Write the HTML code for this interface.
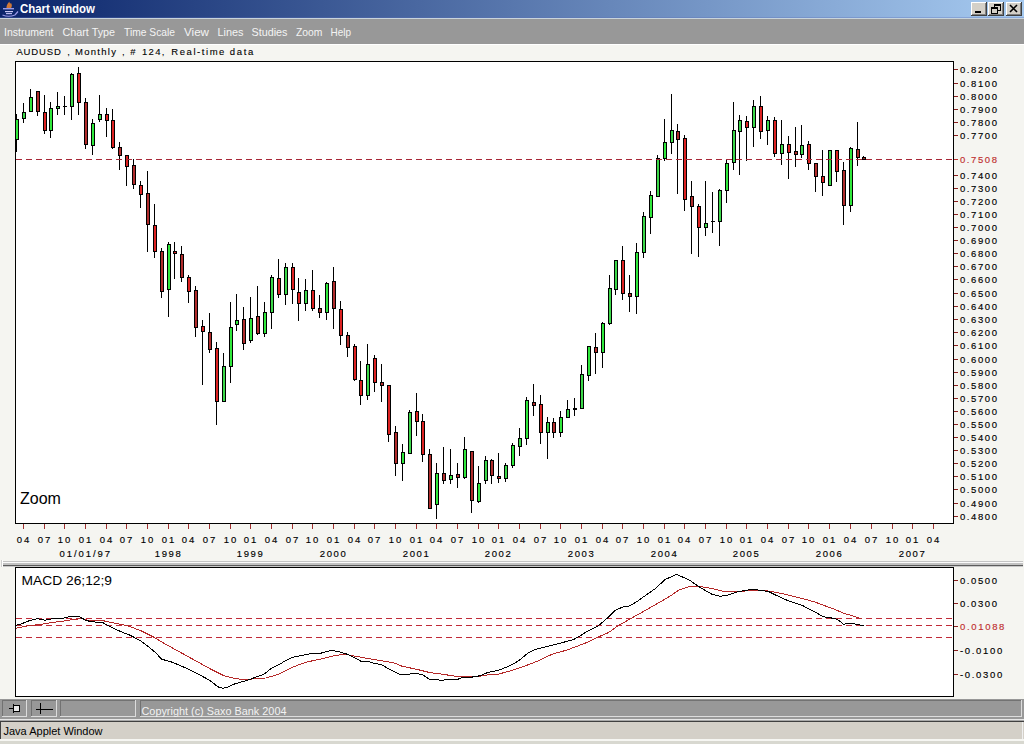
<!DOCTYPE html><html><head><meta charset="utf-8"><style>
html,body{margin:0;padding:0;width:1024px;height:744px;overflow:hidden;background:#f5f5f1}
svg{display:block}
text{font-family:"Liberation Sans", sans-serif}
</style></head><body>
<svg width="1024" height="744" viewBox="0 0 1024 744" shape-rendering="crispEdges">
<defs>
<linearGradient id="tg" x1="0" x2="1" y1="0" y2="0">
<stop offset="0" stop-color="#0a246a"/><stop offset="1" stop-color="#a6caf0"/>
</linearGradient>
</defs>
<rect x="0" y="0" width="1024" height="744" fill="#f5f5f1"/>

<rect x="0" y="0" width="1024" height="18" fill="url(#tg)"/>
<rect x="0" y="17" width="1024" height="1" fill="#5d6fb8" opacity="0.35"/><rect x="0" y="18" width="1024" height="1" fill="#c8d4dc"/>
<g shape-rendering="auto"><path d="M6.5 8.5 Q6 5 9.5 1.5 Q9 4 11.5 3.5 Q12.5 6 11 8.5 Z" fill="#d07838"/><rect x="3" y="8" width="11" height="1.4" fill="#9898e8"/><rect x="5" y="11" width="8" height="1.2" fill="#c8c8f4"/><rect x="6" y="13" width="6" height="1.2" fill="#b8b8f0"/><path d="M2.5 15 Q8.5 17.5 15 15 L18 11.5" stroke="#9a9ae8" stroke-width="1.2" fill="none"/></g>
<text x="20" y="13" font-size="12" font-weight="bold" fill="#fff" textLength="75" lengthAdjust="spacingAndGlyphs" shape-rendering="auto">Chart window</text>
<rect x="971" y="2" width="16" height="14" fill="#d4d0c8"/>
<rect x="971" y="2" width="15" height="1" fill="#fff"/><rect x="971" y="2" width="1" height="13" fill="#fff"/>
<rect x="971" y="15" width="16" height="1" fill="#404040"/><rect x="986" y="2" width="1" height="14" fill="#404040"/>
<rect x="972" y="14" width="14" height="1" fill="#808080"/><rect x="985" y="3" width="1" height="12" fill="#808080"/>
<rect x="975" y="11" width="6" height="2" fill="#000"/>
<rect x="988" y="2" width="16" height="14" fill="#d4d0c8"/>
<rect x="988" y="2" width="15" height="1" fill="#fff"/><rect x="988" y="2" width="1" height="13" fill="#fff"/>
<rect x="988" y="15" width="16" height="1" fill="#404040"/><rect x="1003" y="2" width="1" height="14" fill="#404040"/>
<rect x="989" y="14" width="14" height="1" fill="#808080"/><rect x="1002" y="3" width="1" height="12" fill="#808080"/>
<rect x="994" y="4" width="6" height="6" fill="none" stroke="#000" stroke-width="1"/><rect x="994" y="4" width="6" height="2" fill="#000"/>
<rect x="991" y="7" width="6" height="6" fill="#d4d0c8" stroke="#000" stroke-width="1"/><rect x="991" y="7" width="6" height="2" fill="#000"/>
<rect x="1006" y="2" width="16" height="14" fill="#d4d0c8"/>
<rect x="1006" y="2" width="15" height="1" fill="#fff"/><rect x="1006" y="2" width="1" height="13" fill="#fff"/>
<rect x="1006" y="15" width="16" height="1" fill="#404040"/><rect x="1021" y="2" width="1" height="14" fill="#404040"/>
<rect x="1007" y="14" width="14" height="1" fill="#808080"/><rect x="1020" y="3" width="1" height="12" fill="#808080"/>
<path d="M1010 5 L1017 12 M1017 5 L1010 12" stroke="#000" stroke-width="1.6" shape-rendering="auto"/>
<rect x="0" y="19" width="1024" height="25" fill="#989898"/>
<rect x="0" y="44" width="1024" height="1" fill="#ffffff"/>
<text x="4" y="36" font-size="11" fill="#f4f4f4" textLength="49.5" lengthAdjust="spacingAndGlyphs">Instrument</text>
<text x="62.5" y="36" font-size="11" fill="#f4f4f4" textLength="52.5" lengthAdjust="spacingAndGlyphs">Chart Type</text>
<text x="124" y="36" font-size="11" fill="#f4f4f4" textLength="51" lengthAdjust="spacingAndGlyphs">Time Scale</text>
<text x="184" y="36" font-size="11" fill="#f4f4f4" textLength="25" lengthAdjust="spacingAndGlyphs">View</text>
<text x="217.5" y="36" font-size="11" fill="#f4f4f4" textLength="26" lengthAdjust="spacingAndGlyphs">Lines</text>
<text x="251.5" y="36" font-size="11" fill="#f4f4f4" textLength="36" lengthAdjust="spacingAndGlyphs">Studies</text>
<text x="296" y="36" font-size="11" fill="#f4f4f4" textLength="26.5" lengthAdjust="spacingAndGlyphs">Zoom</text>
<text x="330.5" y="36" font-size="11" fill="#f4f4f4" textLength="20.5" lengthAdjust="spacingAndGlyphs">Help</text>
<text x="16.4" y="54.6" font-size="9.5" fill="#000" stroke="#000" stroke-width="0.1" textLength="44.5" lengthAdjust="spacing">AUDUSD</text>
<text x="67.2" y="54.6" font-size="9.5" fill="#000" stroke="#000" stroke-width="0.1" textLength="2" lengthAdjust="spacing">,</text>
<text x="75" y="54.6" font-size="9.5" fill="#000" stroke="#000" stroke-width="0.1" textLength="41" lengthAdjust="spacing">Monthly</text>
<text x="122" y="54.6" font-size="9.5" fill="#000" stroke="#000" stroke-width="0.1" textLength="2" lengthAdjust="spacing">,</text>
<text x="130.3" y="54.6" font-size="9.5" fill="#000" stroke="#000" stroke-width="0.1" textLength="6.3" lengthAdjust="spacing">#</text>
<text x="142" y="54.6" font-size="9.5" fill="#000" stroke="#000" stroke-width="0.1" textLength="22.5" lengthAdjust="spacing">124,</text>
<text x="171.3" y="54.6" font-size="9.5" fill="#000" stroke="#000" stroke-width="0.1" textLength="53.1" lengthAdjust="spacing">Real-time</text>
<text x="229.8" y="54.6" font-size="9.5" fill="#000" stroke="#000" stroke-width="0.1" textLength="23.4" lengthAdjust="spacing">data</text>
<rect x="15" y="61" width="939" height="463" fill="#fff"/>
<rect x="15" y="61" width="939" height="1" fill="#000"/><rect x="15" y="523" width="939" height="1" fill="#000"/>
<rect x="15" y="61" width="1" height="463" fill="#000"/><rect x="953" y="61" width="1" height="463" fill="#000"/>
<rect x="954" y="69" width="4" height="1" fill="#8a2020"/>
<text x="960" y="72.5" font-size="9.5" fill="#000" stroke="#000" stroke-width="0.15" textLength="37" lengthAdjust="spacing">0.8200</text>
<rect x="954" y="83" width="4" height="1" fill="#8a2020"/>
<text x="960" y="86.5" font-size="9.5" fill="#000" stroke="#000" stroke-width="0.15" textLength="37" lengthAdjust="spacing">0.8100</text>
<rect x="954" y="96" width="4" height="1" fill="#8a2020"/>
<text x="960" y="99.5" font-size="9.5" fill="#000" stroke="#000" stroke-width="0.15" textLength="37" lengthAdjust="spacing">0.8000</text>
<rect x="954" y="109" width="4" height="1" fill="#8a2020"/>
<text x="960" y="112.5" font-size="9.5" fill="#000" stroke="#000" stroke-width="0.15" textLength="37" lengthAdjust="spacing">0.7900</text>
<rect x="954" y="122" width="4" height="1" fill="#8a2020"/>
<text x="960" y="125.5" font-size="9.5" fill="#000" stroke="#000" stroke-width="0.15" textLength="37" lengthAdjust="spacing">0.7800</text>
<rect x="954" y="135" width="4" height="1" fill="#8a2020"/>
<text x="960" y="138.5" font-size="9.5" fill="#000" stroke="#000" stroke-width="0.15" textLength="37" lengthAdjust="spacing">0.7700</text>
<rect x="954" y="175" width="4" height="1" fill="#8a2020"/>
<text x="960" y="178.5" font-size="9.5" fill="#000" stroke="#000" stroke-width="0.15" textLength="37" lengthAdjust="spacing">0.7400</text>
<rect x="954" y="188" width="4" height="1" fill="#8a2020"/>
<text x="960" y="191.5" font-size="9.5" fill="#000" stroke="#000" stroke-width="0.15" textLength="37" lengthAdjust="spacing">0.7300</text>
<rect x="954" y="201" width="4" height="1" fill="#8a2020"/>
<text x="960" y="204.5" font-size="9.5" fill="#000" stroke="#000" stroke-width="0.15" textLength="37" lengthAdjust="spacing">0.7200</text>
<rect x="954" y="214" width="4" height="1" fill="#8a2020"/>
<text x="960" y="217.5" font-size="9.5" fill="#000" stroke="#000" stroke-width="0.15" textLength="37" lengthAdjust="spacing">0.7100</text>
<rect x="954" y="227" width="4" height="1" fill="#8a2020"/>
<text x="960" y="230.5" font-size="9.5" fill="#000" stroke="#000" stroke-width="0.15" textLength="37" lengthAdjust="spacing">0.7000</text>
<rect x="954" y="240" width="4" height="1" fill="#8a2020"/>
<text x="960" y="243.5" font-size="9.5" fill="#000" stroke="#000" stroke-width="0.15" textLength="37" lengthAdjust="spacing">0.6900</text>
<rect x="954" y="253" width="4" height="1" fill="#8a2020"/>
<text x="960" y="256.5" font-size="9.5" fill="#000" stroke="#000" stroke-width="0.15" textLength="37" lengthAdjust="spacing">0.6800</text>
<rect x="954" y="266" width="4" height="1" fill="#8a2020"/>
<text x="960" y="269.5" font-size="9.5" fill="#000" stroke="#000" stroke-width="0.15" textLength="37" lengthAdjust="spacing">0.6700</text>
<rect x="954" y="279" width="4" height="1" fill="#8a2020"/>
<text x="960" y="282.5" font-size="9.5" fill="#000" stroke="#000" stroke-width="0.15" textLength="37" lengthAdjust="spacing">0.6600</text>
<rect x="954" y="293" width="4" height="1" fill="#8a2020"/>
<text x="960" y="296.5" font-size="9.5" fill="#000" stroke="#000" stroke-width="0.15" textLength="37" lengthAdjust="spacing">0.6500</text>
<rect x="954" y="306" width="4" height="1" fill="#8a2020"/>
<text x="960" y="309.5" font-size="9.5" fill="#000" stroke="#000" stroke-width="0.15" textLength="37" lengthAdjust="spacing">0.6400</text>
<rect x="954" y="319" width="4" height="1" fill="#8a2020"/>
<text x="960" y="322.5" font-size="9.5" fill="#000" stroke="#000" stroke-width="0.15" textLength="37" lengthAdjust="spacing">0.6300</text>
<rect x="954" y="332" width="4" height="1" fill="#8a2020"/>
<text x="960" y="335.5" font-size="9.5" fill="#000" stroke="#000" stroke-width="0.15" textLength="37" lengthAdjust="spacing">0.6200</text>
<rect x="954" y="345" width="4" height="1" fill="#8a2020"/>
<text x="960" y="348.5" font-size="9.5" fill="#000" stroke="#000" stroke-width="0.15" textLength="37" lengthAdjust="spacing">0.6100</text>
<rect x="954" y="359" width="4" height="1" fill="#8a2020"/>
<text x="960" y="362.5" font-size="9.5" fill="#000" stroke="#000" stroke-width="0.15" textLength="37" lengthAdjust="spacing">0.6000</text>
<rect x="954" y="372" width="4" height="1" fill="#8a2020"/>
<text x="960" y="375.5" font-size="9.5" fill="#000" stroke="#000" stroke-width="0.15" textLength="37" lengthAdjust="spacing">0.5900</text>
<rect x="954" y="385" width="4" height="1" fill="#8a2020"/>
<text x="960" y="388.5" font-size="9.5" fill="#000" stroke="#000" stroke-width="0.15" textLength="37" lengthAdjust="spacing">0.5800</text>
<rect x="954" y="398" width="4" height="1" fill="#8a2020"/>
<text x="960" y="401.5" font-size="9.5" fill="#000" stroke="#000" stroke-width="0.15" textLength="37" lengthAdjust="spacing">0.5700</text>
<rect x="954" y="411" width="4" height="1" fill="#8a2020"/>
<text x="960" y="414.5" font-size="9.5" fill="#000" stroke="#000" stroke-width="0.15" textLength="37" lengthAdjust="spacing">0.5600</text>
<rect x="954" y="424" width="4" height="1" fill="#8a2020"/>
<text x="960" y="427.5" font-size="9.5" fill="#000" stroke="#000" stroke-width="0.15" textLength="37" lengthAdjust="spacing">0.5500</text>
<rect x="954" y="437" width="4" height="1" fill="#8a2020"/>
<text x="960" y="440.5" font-size="9.5" fill="#000" stroke="#000" stroke-width="0.15" textLength="37" lengthAdjust="spacing">0.5400</text>
<rect x="954" y="450" width="4" height="1" fill="#8a2020"/>
<text x="960" y="453.5" font-size="9.5" fill="#000" stroke="#000" stroke-width="0.15" textLength="37" lengthAdjust="spacing">0.5300</text>
<rect x="954" y="463" width="4" height="1" fill="#8a2020"/>
<text x="960" y="466.5" font-size="9.5" fill="#000" stroke="#000" stroke-width="0.15" textLength="37" lengthAdjust="spacing">0.5200</text>
<rect x="954" y="476" width="4" height="1" fill="#8a2020"/>
<text x="960" y="479.5" font-size="9.5" fill="#000" stroke="#000" stroke-width="0.15" textLength="37" lengthAdjust="spacing">0.5100</text>
<rect x="954" y="489" width="4" height="1" fill="#8a2020"/>
<text x="960" y="492.5" font-size="9.5" fill="#000" stroke="#000" stroke-width="0.15" textLength="37" lengthAdjust="spacing">0.5000</text>
<rect x="954" y="503" width="4" height="1" fill="#8a2020"/>
<text x="960" y="506.5" font-size="9.5" fill="#000" stroke="#000" stroke-width="0.15" textLength="37" lengthAdjust="spacing">0.4900</text>
<rect x="954" y="516" width="4" height="1" fill="#8a2020"/>
<text x="960" y="519.5" font-size="9.5" fill="#000" stroke="#000" stroke-width="0.15" textLength="37" lengthAdjust="spacing">0.4800</text>
<rect x="954" y="159" width="4" height="1" fill="#c03030"/>
<text x="960" y="162.5" font-size="9.5" fill="#c03030" stroke="#c03030" stroke-width="0.15" textLength="37" lengthAdjust="spacing">0.7508</text>
<rect x="23" y="524" width="1" height="5" fill="#a03030"/>
<text x="23" y="543" font-size="9.5" fill="#000" stroke="#000" stroke-width="0.15" text-anchor="middle" textLength="12.5" lengthAdjust="spacing">04</text>
<rect x="44" y="524" width="1" height="5" fill="#a03030"/>
<text x="44" y="543" font-size="9.5" fill="#000" stroke="#000" stroke-width="0.15" text-anchor="middle" textLength="12.5" lengthAdjust="spacing">07</text>
<rect x="64" y="524" width="1" height="5" fill="#a03030"/>
<text x="64" y="543" font-size="9.5" fill="#000" stroke="#000" stroke-width="0.15" text-anchor="middle" textLength="12.5" lengthAdjust="spacing">10</text>
<rect x="85" y="524" width="1" height="5" fill="#a03030"/>
<text x="85" y="543" font-size="9.5" fill="#000" stroke="#000" stroke-width="0.15" text-anchor="middle" textLength="12.5" lengthAdjust="spacing">01</text>
<text x="84.8" y="557" font-size="9.5" fill="#000" stroke="#000" stroke-width="0.15" text-anchor="middle" textLength="50.5" lengthAdjust="spacing">01/01/97</text>
<rect x="106" y="524" width="1" height="5" fill="#a03030"/>
<text x="106" y="543" font-size="9.5" fill="#000" stroke="#000" stroke-width="0.15" text-anchor="middle" textLength="12.5" lengthAdjust="spacing">04</text>
<rect x="126" y="524" width="1" height="5" fill="#a03030"/>
<text x="126" y="543" font-size="9.5" fill="#000" stroke="#000" stroke-width="0.15" text-anchor="middle" textLength="12.5" lengthAdjust="spacing">07</text>
<rect x="147" y="524" width="1" height="5" fill="#a03030"/>
<text x="147" y="543" font-size="9.5" fill="#000" stroke="#000" stroke-width="0.15" text-anchor="middle" textLength="12.5" lengthAdjust="spacing">10</text>
<rect x="168" y="524" width="1" height="5" fill="#a03030"/>
<text x="168" y="543" font-size="9.5" fill="#000" stroke="#000" stroke-width="0.15" text-anchor="middle" textLength="12.5" lengthAdjust="spacing">01</text>
<text x="167.8" y="557" font-size="9.5" fill="#000" stroke="#000" stroke-width="0.15" text-anchor="middle" textLength="26" lengthAdjust="spacing">1998</text>
<rect x="188" y="524" width="1" height="5" fill="#a03030"/>
<text x="188" y="543" font-size="9.5" fill="#000" stroke="#000" stroke-width="0.15" text-anchor="middle" textLength="12.5" lengthAdjust="spacing">04</text>
<rect x="209" y="524" width="1" height="5" fill="#a03030"/>
<text x="209" y="543" font-size="9.5" fill="#000" stroke="#000" stroke-width="0.15" text-anchor="middle" textLength="12.5" lengthAdjust="spacing">07</text>
<rect x="230" y="524" width="1" height="5" fill="#a03030"/>
<text x="230" y="543" font-size="9.5" fill="#000" stroke="#000" stroke-width="0.15" text-anchor="middle" textLength="12.5" lengthAdjust="spacing">10</text>
<rect x="250" y="524" width="1" height="5" fill="#a03030"/>
<text x="250" y="543" font-size="9.5" fill="#000" stroke="#000" stroke-width="0.15" text-anchor="middle" textLength="12.5" lengthAdjust="spacing">01</text>
<text x="249.8" y="557" font-size="9.5" fill="#000" stroke="#000" stroke-width="0.15" text-anchor="middle" textLength="26" lengthAdjust="spacing">1999</text>
<rect x="271" y="524" width="1" height="5" fill="#a03030"/>
<text x="271" y="543" font-size="9.5" fill="#000" stroke="#000" stroke-width="0.15" text-anchor="middle" textLength="12.5" lengthAdjust="spacing">04</text>
<rect x="292" y="524" width="1" height="5" fill="#a03030"/>
<text x="292" y="543" font-size="9.5" fill="#000" stroke="#000" stroke-width="0.15" text-anchor="middle" textLength="12.5" lengthAdjust="spacing">07</text>
<rect x="312" y="524" width="1" height="5" fill="#a03030"/>
<text x="312" y="543" font-size="9.5" fill="#000" stroke="#000" stroke-width="0.15" text-anchor="middle" textLength="12.5" lengthAdjust="spacing">10</text>
<rect x="333" y="524" width="1" height="5" fill="#a03030"/>
<text x="333" y="543" font-size="9.5" fill="#000" stroke="#000" stroke-width="0.15" text-anchor="middle" textLength="12.5" lengthAdjust="spacing">01</text>
<text x="332.8" y="557" font-size="9.5" fill="#000" stroke="#000" stroke-width="0.15" text-anchor="middle" textLength="26" lengthAdjust="spacing">2000</text>
<rect x="354" y="524" width="1" height="5" fill="#a03030"/>
<text x="354" y="543" font-size="9.5" fill="#000" stroke="#000" stroke-width="0.15" text-anchor="middle" textLength="12.5" lengthAdjust="spacing">04</text>
<rect x="374" y="524" width="1" height="5" fill="#a03030"/>
<text x="374" y="543" font-size="9.5" fill="#000" stroke="#000" stroke-width="0.15" text-anchor="middle" textLength="12.5" lengthAdjust="spacing">07</text>
<rect x="395" y="524" width="1" height="5" fill="#a03030"/>
<text x="395" y="543" font-size="9.5" fill="#000" stroke="#000" stroke-width="0.15" text-anchor="middle" textLength="12.5" lengthAdjust="spacing">10</text>
<rect x="416" y="524" width="1" height="5" fill="#a03030"/>
<text x="416" y="543" font-size="9.5" fill="#000" stroke="#000" stroke-width="0.15" text-anchor="middle" textLength="12.5" lengthAdjust="spacing">01</text>
<text x="415.8" y="557" font-size="9.5" fill="#000" stroke="#000" stroke-width="0.15" text-anchor="middle" textLength="26" lengthAdjust="spacing">2001</text>
<rect x="436" y="524" width="1" height="5" fill="#a03030"/>
<text x="436" y="543" font-size="9.5" fill="#000" stroke="#000" stroke-width="0.15" text-anchor="middle" textLength="12.5" lengthAdjust="spacing">04</text>
<rect x="457" y="524" width="1" height="5" fill="#a03030"/>
<text x="457" y="543" font-size="9.5" fill="#000" stroke="#000" stroke-width="0.15" text-anchor="middle" textLength="12.5" lengthAdjust="spacing">07</text>
<rect x="478" y="524" width="1" height="5" fill="#a03030"/>
<text x="478" y="543" font-size="9.5" fill="#000" stroke="#000" stroke-width="0.15" text-anchor="middle" textLength="12.5" lengthAdjust="spacing">10</text>
<rect x="498" y="524" width="1" height="5" fill="#a03030"/>
<text x="498" y="543" font-size="9.5" fill="#000" stroke="#000" stroke-width="0.15" text-anchor="middle" textLength="12.5" lengthAdjust="spacing">01</text>
<text x="497.8" y="557" font-size="9.5" fill="#000" stroke="#000" stroke-width="0.15" text-anchor="middle" textLength="26" lengthAdjust="spacing">2002</text>
<rect x="519" y="524" width="1" height="5" fill="#a03030"/>
<text x="519" y="543" font-size="9.5" fill="#000" stroke="#000" stroke-width="0.15" text-anchor="middle" textLength="12.5" lengthAdjust="spacing">04</text>
<rect x="540" y="524" width="1" height="5" fill="#a03030"/>
<text x="540" y="543" font-size="9.5" fill="#000" stroke="#000" stroke-width="0.15" text-anchor="middle" textLength="12.5" lengthAdjust="spacing">07</text>
<rect x="560" y="524" width="1" height="5" fill="#a03030"/>
<text x="560" y="543" font-size="9.5" fill="#000" stroke="#000" stroke-width="0.15" text-anchor="middle" textLength="12.5" lengthAdjust="spacing">10</text>
<rect x="581" y="524" width="1" height="5" fill="#a03030"/>
<text x="581" y="543" font-size="9.5" fill="#000" stroke="#000" stroke-width="0.15" text-anchor="middle" textLength="12.5" lengthAdjust="spacing">01</text>
<text x="580.8" y="557" font-size="9.5" fill="#000" stroke="#000" stroke-width="0.15" text-anchor="middle" textLength="26" lengthAdjust="spacing">2003</text>
<rect x="602" y="524" width="1" height="5" fill="#a03030"/>
<text x="602" y="543" font-size="9.5" fill="#000" stroke="#000" stroke-width="0.15" text-anchor="middle" textLength="12.5" lengthAdjust="spacing">04</text>
<rect x="622" y="524" width="1" height="5" fill="#a03030"/>
<text x="622" y="543" font-size="9.5" fill="#000" stroke="#000" stroke-width="0.15" text-anchor="middle" textLength="12.5" lengthAdjust="spacing">07</text>
<rect x="643" y="524" width="1" height="5" fill="#a03030"/>
<text x="643" y="543" font-size="9.5" fill="#000" stroke="#000" stroke-width="0.15" text-anchor="middle" textLength="12.5" lengthAdjust="spacing">10</text>
<rect x="664" y="524" width="1" height="5" fill="#a03030"/>
<text x="664" y="543" font-size="9.5" fill="#000" stroke="#000" stroke-width="0.15" text-anchor="middle" textLength="12.5" lengthAdjust="spacing">01</text>
<text x="663.8" y="557" font-size="9.5" fill="#000" stroke="#000" stroke-width="0.15" text-anchor="middle" textLength="26" lengthAdjust="spacing">2004</text>
<rect x="684" y="524" width="1" height="5" fill="#a03030"/>
<text x="684" y="543" font-size="9.5" fill="#000" stroke="#000" stroke-width="0.15" text-anchor="middle" textLength="12.5" lengthAdjust="spacing">04</text>
<rect x="705" y="524" width="1" height="5" fill="#a03030"/>
<text x="705" y="543" font-size="9.5" fill="#000" stroke="#000" stroke-width="0.15" text-anchor="middle" textLength="12.5" lengthAdjust="spacing">07</text>
<rect x="726" y="524" width="1" height="5" fill="#a03030"/>
<text x="726" y="543" font-size="9.5" fill="#000" stroke="#000" stroke-width="0.15" text-anchor="middle" textLength="12.5" lengthAdjust="spacing">10</text>
<rect x="746" y="524" width="1" height="5" fill="#a03030"/>
<text x="746" y="543" font-size="9.5" fill="#000" stroke="#000" stroke-width="0.15" text-anchor="middle" textLength="12.5" lengthAdjust="spacing">01</text>
<text x="745.8" y="557" font-size="9.5" fill="#000" stroke="#000" stroke-width="0.15" text-anchor="middle" textLength="26" lengthAdjust="spacing">2005</text>
<rect x="767" y="524" width="1" height="5" fill="#a03030"/>
<text x="767" y="543" font-size="9.5" fill="#000" stroke="#000" stroke-width="0.15" text-anchor="middle" textLength="12.5" lengthAdjust="spacing">04</text>
<rect x="788" y="524" width="1" height="5" fill="#a03030"/>
<text x="788" y="543" font-size="9.5" fill="#000" stroke="#000" stroke-width="0.15" text-anchor="middle" textLength="12.5" lengthAdjust="spacing">07</text>
<rect x="808" y="524" width="1" height="5" fill="#a03030"/>
<text x="808" y="543" font-size="9.5" fill="#000" stroke="#000" stroke-width="0.15" text-anchor="middle" textLength="12.5" lengthAdjust="spacing">10</text>
<rect x="829" y="524" width="1" height="5" fill="#a03030"/>
<text x="829" y="543" font-size="9.5" fill="#000" stroke="#000" stroke-width="0.15" text-anchor="middle" textLength="12.5" lengthAdjust="spacing">01</text>
<text x="828.8" y="557" font-size="9.5" fill="#000" stroke="#000" stroke-width="0.15" text-anchor="middle" textLength="26" lengthAdjust="spacing">2006</text>
<rect x="850" y="524" width="1" height="5" fill="#a03030"/>
<text x="850" y="543" font-size="9.5" fill="#000" stroke="#000" stroke-width="0.15" text-anchor="middle" textLength="12.5" lengthAdjust="spacing">04</text>
<rect x="871" y="524" width="1" height="5" fill="#a03030"/>
<text x="871" y="543" font-size="9.5" fill="#000" stroke="#000" stroke-width="0.15" text-anchor="middle" textLength="12.5" lengthAdjust="spacing">07</text>
<rect x="892" y="524" width="1" height="5" fill="#a03030"/>
<text x="892" y="543" font-size="9.5" fill="#000" stroke="#000" stroke-width="0.15" text-anchor="middle" textLength="12.5" lengthAdjust="spacing">10</text>
<rect x="912" y="524" width="1" height="5" fill="#a03030"/>
<text x="912" y="543" font-size="9.5" fill="#000" stroke="#000" stroke-width="0.15" text-anchor="middle" textLength="12.5" lengthAdjust="spacing">01</text>
<text x="911.8" y="557" font-size="9.5" fill="#000" stroke="#000" stroke-width="0.15" text-anchor="middle" textLength="26" lengthAdjust="spacing">2007</text>
<rect x="933" y="524" width="1" height="5" fill="#a03030"/>
<text x="933" y="543" font-size="9.5" fill="#000" stroke="#000" stroke-width="0.15" text-anchor="middle" textLength="12.5" lengthAdjust="spacing">04</text>
<text x="20" y="504" font-size="16" fill="#000">Zoom</text>
<rect x="16" y="114" width="1" height="38" fill="#000"/>
<rect x="15" y="119" width="4" height="21" fill="#000"/>
<rect x="16" y="120" width="2" height="19" fill="#30e83c"/>
<rect x="23" y="103" width="1" height="20" fill="#000"/>
<rect x="22" y="112" width="4" height="7" fill="#000"/>
<rect x="23" y="113" width="2" height="5" fill="#3cd84a"/>
<rect x="30" y="89" width="1" height="23" fill="#000"/>
<rect x="29" y="97" width="4" height="15" fill="#000"/>
<rect x="30" y="98" width="2" height="13" fill="#30e83c"/>
<rect x="37" y="91" width="1" height="25" fill="#000"/>
<rect x="36" y="91" width="4" height="21" fill="#000"/>
<rect x="37" y="92" width="2" height="19" fill="#b02c2c"/>
<rect x="44" y="95" width="1" height="39" fill="#000"/>
<rect x="43" y="112" width="4" height="19" fill="#000"/>
<rect x="44" y="113" width="2" height="17" fill="#dc2222"/>
<rect x="50" y="102" width="1" height="36" fill="#000"/>
<rect x="49" y="108" width="4" height="23" fill="#000"/>
<rect x="50" y="109" width="2" height="21" fill="#30e83c"/>
<rect x="57" y="92" width="1" height="23" fill="#000"/>
<rect x="56" y="106" width="4" height="3" fill="#000"/>
<rect x="57" y="107" width="2" height="1" fill="#3cd84a"/>
<rect x="64" y="96" width="1" height="19" fill="#000"/>
<rect x="63" y="106" width="4" height="1" fill="#000"/>
<rect x="71" y="73" width="1" height="47" fill="#000"/>
<rect x="70" y="74" width="4" height="33" fill="#000"/>
<rect x="71" y="75" width="2" height="31" fill="#3cd84a"/>
<rect x="78" y="67" width="1" height="48" fill="#000"/>
<rect x="77" y="73" width="4" height="30" fill="#000"/>
<rect x="78" y="74" width="2" height="28" fill="#dc2222"/>
<rect x="85" y="98" width="1" height="51" fill="#000"/>
<rect x="84" y="102" width="4" height="43" fill="#000"/>
<rect x="85" y="103" width="2" height="41" fill="#b02c2c"/>
<rect x="92" y="119" width="1" height="36" fill="#000"/>
<rect x="91" y="123" width="4" height="23" fill="#000"/>
<rect x="92" y="124" width="2" height="21" fill="#30e83c"/>
<rect x="99" y="95" width="1" height="27" fill="#000"/>
<rect x="98" y="114" width="4" height="6" fill="#000"/>
<rect x="99" y="115" width="2" height="4" fill="#3cd84a"/>
<rect x="106" y="108" width="1" height="29" fill="#000"/>
<rect x="105" y="114" width="4" height="7" fill="#000"/>
<rect x="106" y="115" width="2" height="5" fill="#dc2222"/>
<rect x="112" y="109" width="1" height="40" fill="#000"/>
<rect x="111" y="120" width="4" height="28" fill="#000"/>
<rect x="112" y="121" width="2" height="26" fill="#dc2222"/>
<rect x="119" y="142" width="1" height="28" fill="#000"/>
<rect x="118" y="147" width="4" height="9" fill="#000"/>
<rect x="119" y="148" width="2" height="7" fill="#b02c2c"/>
<rect x="126" y="155" width="1" height="31" fill="#000"/>
<rect x="125" y="155" width="4" height="12" fill="#000"/>
<rect x="126" y="156" width="2" height="10" fill="#dc2222"/>
<rect x="133" y="159" width="1" height="30" fill="#000"/>
<rect x="132" y="165" width="4" height="20" fill="#000"/>
<rect x="133" y="166" width="2" height="18" fill="#b02c2c"/>
<rect x="140" y="181" width="1" height="27" fill="#000"/>
<rect x="139" y="185" width="4" height="10" fill="#000"/>
<rect x="140" y="186" width="2" height="8" fill="#dc2222"/>
<rect x="147" y="171" width="1" height="81" fill="#000"/>
<rect x="146" y="193" width="4" height="32" fill="#000"/>
<rect x="147" y="194" width="2" height="30" fill="#b02c2c"/>
<rect x="154" y="204" width="1" height="54" fill="#000"/>
<rect x="153" y="225" width="4" height="27" fill="#000"/>
<rect x="154" y="226" width="2" height="25" fill="#dc2222"/>
<rect x="161" y="248" width="1" height="50" fill="#000"/>
<rect x="160" y="251" width="4" height="41" fill="#000"/>
<rect x="161" y="252" width="2" height="39" fill="#b02c2c"/>
<rect x="168" y="242" width="1" height="75" fill="#000"/>
<rect x="167" y="244" width="4" height="46" fill="#000"/>
<rect x="168" y="245" width="2" height="44" fill="#30e83c"/>
<rect x="174" y="242" width="1" height="37" fill="#000"/>
<rect x="173" y="251" width="4" height="3" fill="#000"/>
<rect x="174" y="252" width="2" height="1" fill="#dc2222"/>
<rect x="181" y="246" width="1" height="36" fill="#000"/>
<rect x="180" y="254" width="4" height="24" fill="#000"/>
<rect x="181" y="255" width="2" height="22" fill="#b02c2c"/>
<rect x="188" y="275" width="1" height="28" fill="#000"/>
<rect x="187" y="277" width="4" height="15" fill="#000"/>
<rect x="188" y="278" width="2" height="13" fill="#dc2222"/>
<rect x="195" y="286" width="1" height="51" fill="#000"/>
<rect x="194" y="290" width="4" height="38" fill="#000"/>
<rect x="195" y="291" width="2" height="36" fill="#b02c2c"/>
<rect x="202" y="320" width="1" height="65" fill="#000"/>
<rect x="201" y="326" width="4" height="6" fill="#000"/>
<rect x="202" y="327" width="2" height="4" fill="#dc2222"/>
<rect x="209" y="313" width="1" height="40" fill="#000"/>
<rect x="208" y="332" width="4" height="18" fill="#000"/>
<rect x="209" y="333" width="2" height="16" fill="#b02c2c"/>
<rect x="216" y="342" width="1" height="83" fill="#000"/>
<rect x="215" y="348" width="4" height="54" fill="#000"/>
<rect x="216" y="349" width="2" height="52" fill="#dc2222"/>
<rect x="223" y="353" width="1" height="49" fill="#000"/>
<rect x="222" y="366" width="4" height="36" fill="#000"/>
<rect x="223" y="367" width="2" height="34" fill="#3cd84a"/>
<rect x="230" y="302" width="1" height="81" fill="#000"/>
<rect x="229" y="327" width="4" height="40" fill="#000"/>
<rect x="230" y="328" width="2" height="38" fill="#30e83c"/>
<rect x="236" y="294" width="1" height="37" fill="#000"/>
<rect x="235" y="320" width="4" height="5" fill="#000"/>
<rect x="236" y="321" width="2" height="3" fill="#30e83c"/>
<rect x="243" y="307" width="1" height="43" fill="#000"/>
<rect x="242" y="319" width="4" height="25" fill="#000"/>
<rect x="243" y="320" width="2" height="23" fill="#b02c2c"/>
<rect x="250" y="297" width="1" height="46" fill="#000"/>
<rect x="249" y="318" width="4" height="23" fill="#000"/>
<rect x="250" y="319" width="2" height="21" fill="#30e83c"/>
<rect x="257" y="286" width="1" height="49" fill="#000"/>
<rect x="256" y="316" width="4" height="18" fill="#000"/>
<rect x="257" y="317" width="2" height="16" fill="#b02c2c"/>
<rect x="264" y="302" width="1" height="35" fill="#000"/>
<rect x="263" y="312" width="4" height="22" fill="#000"/>
<rect x="264" y="313" width="2" height="20" fill="#30e83c"/>
<rect x="271" y="275" width="1" height="54" fill="#000"/>
<rect x="270" y="277" width="4" height="36" fill="#000"/>
<rect x="271" y="278" width="2" height="34" fill="#3cd84a"/>
<rect x="278" y="259" width="1" height="39" fill="#000"/>
<rect x="277" y="278" width="4" height="17" fill="#000"/>
<rect x="278" y="279" width="2" height="15" fill="#dc2222"/>
<rect x="285" y="263" width="1" height="42" fill="#000"/>
<rect x="284" y="267" width="4" height="28" fill="#000"/>
<rect x="285" y="268" width="2" height="26" fill="#3cd84a"/>
<rect x="292" y="263" width="1" height="41" fill="#000"/>
<rect x="291" y="267" width="4" height="23" fill="#000"/>
<rect x="292" y="268" width="2" height="21" fill="#dc2222"/>
<rect x="298" y="278" width="1" height="43" fill="#000"/>
<rect x="297" y="292" width="4" height="12" fill="#000"/>
<rect x="298" y="293" width="2" height="10" fill="#dc2222"/>
<rect x="305" y="279" width="1" height="32" fill="#000"/>
<rect x="304" y="290" width="4" height="14" fill="#000"/>
<rect x="305" y="291" width="2" height="12" fill="#3cd84a"/>
<rect x="312" y="270" width="1" height="41" fill="#000"/>
<rect x="311" y="290" width="4" height="19" fill="#000"/>
<rect x="312" y="291" width="2" height="17" fill="#dc2222"/>
<rect x="319" y="295" width="1" height="23" fill="#000"/>
<rect x="318" y="308" width="4" height="5" fill="#000"/>
<rect x="319" y="309" width="2" height="3" fill="#b02c2c"/>
<rect x="326" y="282" width="1" height="38" fill="#000"/>
<rect x="325" y="283" width="4" height="30" fill="#000"/>
<rect x="326" y="284" width="2" height="28" fill="#30e83c"/>
<rect x="333" y="267" width="1" height="62" fill="#000"/>
<rect x="332" y="281" width="4" height="28" fill="#000"/>
<rect x="333" y="282" width="2" height="26" fill="#b02c2c"/>
<rect x="340" y="301" width="1" height="44" fill="#000"/>
<rect x="339" y="309" width="4" height="27" fill="#000"/>
<rect x="340" y="310" width="2" height="25" fill="#dc2222"/>
<rect x="347" y="332" width="1" height="25" fill="#000"/>
<rect x="346" y="335" width="4" height="13" fill="#000"/>
<rect x="347" y="336" width="2" height="11" fill="#b02c2c"/>
<rect x="354" y="344" width="1" height="37" fill="#000"/>
<rect x="353" y="346" width="4" height="34" fill="#000"/>
<rect x="354" y="347" width="2" height="32" fill="#dc2222"/>
<rect x="360" y="361" width="1" height="44" fill="#000"/>
<rect x="359" y="380" width="4" height="16" fill="#000"/>
<rect x="360" y="381" width="2" height="14" fill="#dc2222"/>
<rect x="367" y="344" width="1" height="56" fill="#000"/>
<rect x="366" y="364" width="4" height="32" fill="#000"/>
<rect x="367" y="365" width="2" height="30" fill="#3cd84a"/>
<rect x="374" y="355" width="1" height="37" fill="#000"/>
<rect x="373" y="358" width="4" height="25" fill="#000"/>
<rect x="374" y="359" width="2" height="23" fill="#dc2222"/>
<rect x="381" y="364" width="1" height="38" fill="#000"/>
<rect x="380" y="382" width="4" height="4" fill="#000"/>
<rect x="381" y="383" width="2" height="2" fill="#b02c2c"/>
<rect x="388" y="385" width="1" height="57" fill="#000"/>
<rect x="387" y="385" width="4" height="50" fill="#000"/>
<rect x="388" y="386" width="2" height="48" fill="#dc2222"/>
<rect x="395" y="426" width="1" height="50" fill="#000"/>
<rect x="394" y="432" width="4" height="32" fill="#000"/>
<rect x="395" y="433" width="2" height="30" fill="#b02c2c"/>
<rect x="402" y="444" width="1" height="37" fill="#000"/>
<rect x="401" y="452" width="4" height="12" fill="#000"/>
<rect x="402" y="453" width="2" height="10" fill="#30e83c"/>
<rect x="409" y="410" width="1" height="44" fill="#000"/>
<rect x="408" y="412" width="4" height="42" fill="#000"/>
<rect x="409" y="413" width="2" height="40" fill="#3cd84a"/>
<rect x="416" y="393" width="1" height="43" fill="#000"/>
<rect x="415" y="411" width="4" height="11" fill="#000"/>
<rect x="416" y="412" width="2" height="9" fill="#dc2222"/>
<rect x="422" y="414" width="1" height="48" fill="#000"/>
<rect x="421" y="421" width="4" height="34" fill="#000"/>
<rect x="422" y="422" width="2" height="32" fill="#dc2222"/>
<rect x="429" y="449" width="1" height="60" fill="#000"/>
<rect x="428" y="454" width="4" height="55" fill="#000"/>
<rect x="429" y="455" width="2" height="53" fill="#b02c2c"/>
<rect x="436" y="463" width="1" height="56" fill="#000"/>
<rect x="435" y="473" width="4" height="32" fill="#000"/>
<rect x="436" y="474" width="2" height="30" fill="#30e83c"/>
<rect x="443" y="447" width="1" height="37" fill="#000"/>
<rect x="442" y="473" width="4" height="8" fill="#000"/>
<rect x="443" y="474" width="2" height="6" fill="#b02c2c"/>
<rect x="450" y="449" width="1" height="35" fill="#000"/>
<rect x="449" y="475" width="4" height="5" fill="#000"/>
<rect x="450" y="476" width="2" height="3" fill="#30e83c"/>
<rect x="457" y="463" width="1" height="25" fill="#000"/>
<rect x="456" y="474" width="4" height="4" fill="#000"/>
<rect x="457" y="475" width="2" height="2" fill="#b02c2c"/>
<rect x="464" y="437" width="1" height="42" fill="#000"/>
<rect x="463" y="449" width="4" height="29" fill="#000"/>
<rect x="464" y="450" width="2" height="27" fill="#30e83c"/>
<rect x="471" y="451" width="1" height="62" fill="#000"/>
<rect x="470" y="451" width="4" height="50" fill="#000"/>
<rect x="471" y="452" width="2" height="48" fill="#b02c2c"/>
<rect x="478" y="466" width="1" height="37" fill="#000"/>
<rect x="477" y="483" width="4" height="19" fill="#000"/>
<rect x="478" y="484" width="2" height="17" fill="#30e83c"/>
<rect x="485" y="456" width="1" height="28" fill="#000"/>
<rect x="484" y="460" width="4" height="21" fill="#000"/>
<rect x="485" y="461" width="2" height="19" fill="#3cd84a"/>
<rect x="491" y="459" width="1" height="25" fill="#000"/>
<rect x="490" y="460" width="4" height="16" fill="#000"/>
<rect x="491" y="461" width="2" height="14" fill="#b02c2c"/>
<rect x="498" y="453" width="1" height="30" fill="#000"/>
<rect x="497" y="476" width="4" height="3" fill="#000"/>
<rect x="498" y="477" width="2" height="1" fill="#dc2222"/>
<rect x="505" y="463" width="1" height="19" fill="#000"/>
<rect x="504" y="465" width="4" height="14" fill="#000"/>
<rect x="505" y="466" width="2" height="12" fill="#3cd84a"/>
<rect x="512" y="443" width="1" height="25" fill="#000"/>
<rect x="511" y="445" width="4" height="21" fill="#000"/>
<rect x="512" y="446" width="2" height="19" fill="#30e83c"/>
<rect x="519" y="428" width="1" height="28" fill="#000"/>
<rect x="518" y="438" width="4" height="9" fill="#000"/>
<rect x="519" y="439" width="2" height="7" fill="#3cd84a"/>
<rect x="526" y="397" width="1" height="48" fill="#000"/>
<rect x="525" y="400" width="4" height="39" fill="#000"/>
<rect x="526" y="401" width="2" height="37" fill="#30e83c"/>
<rect x="533" y="384" width="1" height="32" fill="#000"/>
<rect x="532" y="402" width="4" height="4" fill="#000"/>
<rect x="533" y="403" width="2" height="2" fill="#b02c2c"/>
<rect x="540" y="395" width="1" height="49" fill="#000"/>
<rect x="539" y="404" width="4" height="29" fill="#000"/>
<rect x="540" y="405" width="2" height="27" fill="#dc2222"/>
<rect x="547" y="417" width="1" height="42" fill="#000"/>
<rect x="546" y="422" width="4" height="11" fill="#000"/>
<rect x="547" y="423" width="2" height="9" fill="#3cd84a"/>
<rect x="553" y="418" width="1" height="20" fill="#000"/>
<rect x="552" y="422" width="4" height="11" fill="#000"/>
<rect x="553" y="423" width="2" height="9" fill="#b02c2c"/>
<rect x="560" y="411" width="1" height="26" fill="#000"/>
<rect x="559" y="417" width="4" height="16" fill="#000"/>
<rect x="560" y="418" width="2" height="14" fill="#30e83c"/>
<rect x="567" y="400" width="1" height="18" fill="#000"/>
<rect x="566" y="409" width="4" height="9" fill="#000"/>
<rect x="567" y="410" width="2" height="7" fill="#3cd84a"/>
<rect x="574" y="398" width="1" height="18" fill="#000"/>
<rect x="573" y="408" width="4" height="2" fill="#000"/>
<rect x="581" y="365" width="1" height="44" fill="#000"/>
<rect x="580" y="374" width="4" height="35" fill="#000"/>
<rect x="581" y="375" width="2" height="33" fill="#3cd84a"/>
<rect x="588" y="346" width="1" height="35" fill="#000"/>
<rect x="587" y="346" width="4" height="30" fill="#000"/>
<rect x="588" y="347" width="2" height="28" fill="#30e83c"/>
<rect x="595" y="333" width="1" height="41" fill="#000"/>
<rect x="594" y="347" width="4" height="6" fill="#000"/>
<rect x="595" y="348" width="2" height="4" fill="#b02c2c"/>
<rect x="602" y="322" width="1" height="46" fill="#000"/>
<rect x="601" y="323" width="4" height="30" fill="#000"/>
<rect x="602" y="324" width="2" height="28" fill="#30e83c"/>
<rect x="609" y="275" width="1" height="50" fill="#000"/>
<rect x="608" y="288" width="4" height="36" fill="#000"/>
<rect x="609" y="289" width="2" height="34" fill="#3cd84a"/>
<rect x="615" y="260" width="1" height="35" fill="#000"/>
<rect x="614" y="260" width="4" height="30" fill="#000"/>
<rect x="615" y="261" width="2" height="28" fill="#3cd84a"/>
<rect x="622" y="246" width="1" height="54" fill="#000"/>
<rect x="621" y="260" width="4" height="34" fill="#000"/>
<rect x="622" y="261" width="2" height="32" fill="#dc2222"/>
<rect x="629" y="275" width="1" height="37" fill="#000"/>
<rect x="628" y="293" width="4" height="4" fill="#000"/>
<rect x="629" y="294" width="2" height="2" fill="#b02c2c"/>
<rect x="636" y="243" width="1" height="71" fill="#000"/>
<rect x="635" y="252" width="4" height="45" fill="#000"/>
<rect x="636" y="253" width="2" height="43" fill="#30e83c"/>
<rect x="643" y="212" width="1" height="46" fill="#000"/>
<rect x="642" y="216" width="4" height="37" fill="#000"/>
<rect x="643" y="217" width="2" height="35" fill="#3cd84a"/>
<rect x="650" y="191" width="1" height="43" fill="#000"/>
<rect x="649" y="195" width="4" height="23" fill="#000"/>
<rect x="650" y="196" width="2" height="21" fill="#30e83c"/>
<rect x="657" y="155" width="1" height="42" fill="#000"/>
<rect x="656" y="158" width="4" height="39" fill="#000"/>
<rect x="657" y="159" width="2" height="37" fill="#3cd84a"/>
<rect x="664" y="119" width="1" height="42" fill="#000"/>
<rect x="663" y="142" width="4" height="17" fill="#000"/>
<rect x="664" y="143" width="2" height="15" fill="#30e83c"/>
<rect x="671" y="94" width="1" height="60" fill="#000"/>
<rect x="670" y="130" width="4" height="13" fill="#000"/>
<rect x="671" y="131" width="2" height="11" fill="#3cd84a"/>
<rect x="677" y="124" width="1" height="70" fill="#000"/>
<rect x="676" y="131" width="4" height="9" fill="#000"/>
<rect x="677" y="132" width="2" height="7" fill="#b02c2c"/>
<rect x="684" y="135" width="1" height="76" fill="#000"/>
<rect x="683" y="138" width="4" height="62" fill="#000"/>
<rect x="684" y="139" width="2" height="60" fill="#dc2222"/>
<rect x="691" y="181" width="1" height="73" fill="#000"/>
<rect x="690" y="196" width="4" height="11" fill="#000"/>
<rect x="691" y="197" width="2" height="9" fill="#b02c2c"/>
<rect x="698" y="204" width="1" height="53" fill="#000"/>
<rect x="697" y="206" width="4" height="22" fill="#000"/>
<rect x="698" y="207" width="2" height="20" fill="#dc2222"/>
<rect x="705" y="181" width="1" height="55" fill="#000"/>
<rect x="704" y="223" width="4" height="5" fill="#000"/>
<rect x="705" y="224" width="2" height="3" fill="#3cd84a"/>
<rect x="712" y="192" width="1" height="41" fill="#000"/>
<rect x="711" y="221" width="4" height="1" fill="#000"/>
<rect x="719" y="189" width="1" height="57" fill="#000"/>
<rect x="718" y="190" width="4" height="32" fill="#000"/>
<rect x="719" y="191" width="2" height="30" fill="#3cd84a"/>
<rect x="726" y="160" width="1" height="43" fill="#000"/>
<rect x="725" y="163" width="4" height="28" fill="#000"/>
<rect x="726" y="164" width="2" height="26" fill="#30e83c"/>
<rect x="733" y="102" width="1" height="68" fill="#000"/>
<rect x="732" y="130" width="4" height="33" fill="#000"/>
<rect x="733" y="131" width="2" height="31" fill="#3cd84a"/>
<rect x="739" y="115" width="1" height="60" fill="#000"/>
<rect x="738" y="120" width="4" height="12" fill="#000"/>
<rect x="739" y="121" width="2" height="10" fill="#3cd84a"/>
<rect x="746" y="116" width="1" height="45" fill="#000"/>
<rect x="745" y="121" width="4" height="7" fill="#000"/>
<rect x="746" y="122" width="2" height="5" fill="#dc2222"/>
<rect x="753" y="100" width="1" height="47" fill="#000"/>
<rect x="752" y="106" width="4" height="22" fill="#000"/>
<rect x="753" y="107" width="2" height="20" fill="#3cd84a"/>
<rect x="760" y="96" width="1" height="43" fill="#000"/>
<rect x="759" y="106" width="4" height="26" fill="#000"/>
<rect x="760" y="107" width="2" height="24" fill="#dc2222"/>
<rect x="767" y="116" width="1" height="29" fill="#000"/>
<rect x="766" y="120" width="4" height="11" fill="#000"/>
<rect x="767" y="121" width="2" height="9" fill="#3cd84a"/>
<rect x="774" y="117" width="1" height="40" fill="#000"/>
<rect x="773" y="120" width="4" height="34" fill="#000"/>
<rect x="774" y="121" width="2" height="32" fill="#dc2222"/>
<rect x="781" y="120" width="1" height="45" fill="#000"/>
<rect x="780" y="144" width="4" height="10" fill="#000"/>
<rect x="781" y="145" width="2" height="8" fill="#3cd84a"/>
<rect x="788" y="136" width="1" height="43" fill="#000"/>
<rect x="787" y="144" width="4" height="9" fill="#000"/>
<rect x="788" y="145" width="2" height="7" fill="#dc2222"/>
<rect x="795" y="127" width="1" height="40" fill="#000"/>
<rect x="794" y="151" width="4" height="4" fill="#000"/>
<rect x="795" y="152" width="2" height="2" fill="#b02c2c"/>
<rect x="801" y="125" width="1" height="33" fill="#000"/>
<rect x="800" y="145" width="4" height="10" fill="#000"/>
<rect x="801" y="146" width="2" height="8" fill="#3cd84a"/>
<rect x="808" y="141" width="1" height="29" fill="#000"/>
<rect x="807" y="144" width="4" height="20" fill="#000"/>
<rect x="808" y="145" width="2" height="18" fill="#dc2222"/>
<rect x="815" y="163" width="1" height="29" fill="#000"/>
<rect x="814" y="163" width="4" height="14" fill="#000"/>
<rect x="815" y="164" width="2" height="12" fill="#b02c2c"/>
<rect x="822" y="150" width="1" height="46" fill="#000"/>
<rect x="821" y="176" width="4" height="7" fill="#000"/>
<rect x="822" y="177" width="2" height="5" fill="#dc2222"/>
<rect x="829" y="150" width="1" height="36" fill="#000"/>
<rect x="828" y="150" width="4" height="36" fill="#000"/>
<rect x="829" y="151" width="2" height="34" fill="#3cd84a"/>
<rect x="836" y="150" width="1" height="32" fill="#000"/>
<rect x="835" y="150" width="4" height="22" fill="#000"/>
<rect x="836" y="151" width="2" height="20" fill="#dc2222"/>
<rect x="843" y="162" width="1" height="63" fill="#000"/>
<rect x="842" y="170" width="4" height="36" fill="#000"/>
<rect x="843" y="171" width="2" height="34" fill="#b02c2c"/>
<rect x="850" y="147" width="1" height="65" fill="#000"/>
<rect x="849" y="148" width="4" height="58" fill="#000"/>
<rect x="850" y="149" width="2" height="56" fill="#30e83c"/>
<rect x="857" y="122" width="1" height="44" fill="#000"/>
<rect x="856" y="149" width="4" height="9" fill="#000"/>
<rect x="857" y="150" width="2" height="7" fill="#b02c2c"/>
<rect x="863" y="156" width="1" height="4" fill="#000"/>
<rect x="862" y="157" width="4" height="3" fill="#000"/>
<rect x="863" y="158" width="2" height="1" fill="#b02c2c"/>
<line x1="16" y1="159.5" x2="953" y2="159.5" stroke="#a82838" stroke-width="1" stroke-dasharray="6,4"/>
<rect x="1" y="561" width="1022" height="1" fill="#c4c4c4"/>
<rect x="1" y="562" width="1022" height="1" fill="#fafafa"/>
<rect x="1" y="563" width="1022" height="2" fill="#c2c2c2"/>
<rect x="1" y="565" width="1022" height="1" fill="#5c5c5c"/>
<rect x="1" y="566" width="1022" height="1" fill="#c8c8c8"/>
<rect x="1" y="560" width="1" height="7" fill="#d0d0d0"/><rect x="2" y="560" width="1" height="7" fill="#ffffff"/>
<rect x="15" y="567" width="939" height="130" fill="#fff"/>
<rect x="15" y="567" width="939" height="1" fill="#000"/><rect x="15" y="696" width="939" height="1" fill="#000"/>
<rect x="15" y="567" width="1" height="130" fill="#000"/><rect x="953" y="567" width="1" height="130" fill="#000"/>
<text x="21.5" y="585" font-size="13.5" fill="#000" textLength="90.5" lengthAdjust="spacingAndGlyphs">MACD 26;12;9</text>
<rect x="954" y="580" width="4" height="1" fill="#8a2020"/>
<text x="960" y="583.5" font-size="9.5" fill="#000" stroke="#000" stroke-width="0.15" textLength="37" lengthAdjust="spacing">0.0500</text>
<rect x="954" y="603" width="4" height="1" fill="#8a2020"/>
<text x="960" y="606.5" font-size="9.5" fill="#000" stroke="#000" stroke-width="0.15" textLength="37" lengthAdjust="spacing">0.0300</text>
<rect x="954" y="626" width="4" height="1" fill="#8a2020"/>
<text x="960" y="629.5" font-size="9.5" fill="#c03030" stroke="#c03030" stroke-width="0.15" textLength="44.4" lengthAdjust="spacing">0.01088</text>
<rect x="954" y="650" width="4" height="1" fill="#8a2020"/>
<text x="960" y="653.5" font-size="9.5" fill="#000" stroke="#000" stroke-width="0.15" textLength="42.2" lengthAdjust="spacing">-0.0100</text>
<rect x="954" y="674" width="4" height="1" fill="#8a2020"/>
<text x="960" y="677.5" font-size="9.5" fill="#000" stroke="#000" stroke-width="0.15" textLength="42.2" lengthAdjust="spacing">-0.0300</text>
<line x1="16" y1="618.5" x2="952" y2="618.5" stroke="#c02a38" stroke-width="1" stroke-dasharray="6,4"/>
<line x1="16" y1="625.5" x2="952" y2="625.5" stroke="#c02a38" stroke-width="1" stroke-dasharray="6,4"/>
<line x1="16" y1="637.5" x2="952" y2="637.5" stroke="#c02a38" stroke-width="1" stroke-dasharray="6,4"/>
<polyline points="16.3,628.1 28.1,625.7 39.8,624.6 51.5,622.6 63.2,621.1 74.9,619.3 82.0,618.7 90.2,620.7 103.1,620.7 116.0,623.4 127.7,625.7 141.7,631.1 153.4,637.0 165.2,644.0 176.9,650.4 188.6,656.9 200.3,663.3 212.0,669.8 223.8,675.6 235.5,678.6 242.5,679.4 250.0,679.4 256.7,678.2 266.1,678.0 277.8,674.5 291.9,667.4 305.9,662.2 320.0,659.2 334.1,655.7 341.1,654.8 348.1,654.8 357.5,656.6 371.7,659.2 383.4,661.0 395.2,663.3 402.2,666.3 416.3,669.2 430.3,672.7 444.4,674.5 457.3,676.6 470.2,677.0 480.0,676.2 486.7,675.0 498.4,674.1 512.5,670.3 526.6,665.4 538.3,660.9 552.3,654.1 566.4,650.2 578.1,645.9 587.5,642.2 599.4,636.5 608.8,632.4 618.1,625.7 629.8,619.1 642.7,611.9 655.6,604.6 669.7,596.4 679.1,589.8 690.8,586.3 697.8,586.1 714.4,589.0 723.8,591.4 740.2,591.4 751.9,590.5 768.3,591.0 780.0,593.1 794.1,596.6 806.3,599.5 815.6,602.3 825.0,605.8 834.4,609.3 843.8,613.2 853.1,616.1 859.4,618.1 862.5,618.4" fill="none" stroke="#b42828" stroke-width="1" shape-rendering="crispEdges"/>
<polyline points="16.3,625.2 21.0,624.0 29.2,620.7 37.4,618.7 44.5,620.2 53.8,618.5 63.2,618.1 70.3,616.4 78.5,616.4 86.7,620.7 93.7,621.9 103.1,622.8 111.3,627.3 121.8,632.0 130.0,635.2 140.5,640.7 148.8,646.9 155.8,652.8 161.6,659.2 172.2,662.2 183.9,667.2 195.6,672.7 209.7,680.3 217.9,686.8 222.6,688.3 228.4,686.8 235.5,683.6 242.5,681.7 252.0,678.6 263.8,674.2 272.0,668.0 280.2,664.1 284.8,661.0 291.9,657.5 301.3,655.5 310.6,653.6 321.2,653.1 331.7,650.4 338.8,651.6 348.1,654.5 356.3,658.6 361.0,661.3 368.2,661.6 374.1,663.3 381.1,664.5 390.5,669.8 401.0,675.0 409.2,674.2 415.1,673.3 422.1,674.5 429.1,679.1 442.0,680.3 449.1,679.1 458.4,679.1 463.1,677.0 472.5,677.0 480.9,675.6 487.9,672.4 498.4,670.3 509.0,666.2 518.4,660.9 527.7,653.3 535.9,649.2 547.7,646.3 559.4,643.4 573.4,639.6 580.5,635.7 587.5,631.1 598.2,625.9 606.4,618.9 614.6,610.7 622.8,607.0 629.8,605.8 636.9,601.6 646.3,594.9 655.6,588.4 665.0,579.6 676.7,574.4 689.6,580.2 699.0,586.7 712.0,594.3 720.2,596.4 728.4,594.9 737.8,591.7 744.8,590.5 753.0,589.4 761.3,590.5 768.3,591.4 775.3,594.9 787.0,600.2 803.1,605.8 809.4,609.3 815.6,612.4 821.9,615.9 826.6,617.5 834.4,618.3 837.5,619.5 843.8,624.4 848.4,623.1 854.7,623.8 857.8,624.9 863.7,625.2" fill="none" stroke="#000" stroke-width="1" shape-rendering="crispEdges"/>
<rect x="0" y="699" width="1024" height="20" fill="#989898"/>
<rect x="2" y="700" width="25" height="1" fill="#727272"/><rect x="2" y="700" width="1" height="17" fill="#727272"/>
<rect x="2" y="716" width="25" height="1" fill="#dcdcdc"/><rect x="26" y="700" width="1" height="17" fill="#dcdcdc"/>
<rect x="31" y="700" width="26" height="1" fill="#727272"/><rect x="31" y="700" width="1" height="17" fill="#727272"/>
<rect x="31" y="716" width="26" height="1" fill="#dcdcdc"/><rect x="56" y="700" width="1" height="17" fill="#dcdcdc"/>
<rect x="60" y="700" width="76" height="1" fill="#727272"/><rect x="60" y="700" width="1" height="17" fill="#727272"/>
<rect x="60" y="716" width="76" height="1" fill="#dcdcdc"/><rect x="135" y="700" width="1" height="17" fill="#dcdcdc"/>
<rect x="140" y="700" width="882" height="1" fill="#727272"/><rect x="140" y="700" width="1" height="17" fill="#727272"/>
<rect x="140" y="716" width="882" height="1" fill="#dcdcdc"/><rect x="1021" y="700" width="1" height="17" fill="#dcdcdc"/>
<g fill="#000"><rect x="9" y="708" width="5" height="1"/><rect x="13" y="704" width="1" height="9"/><rect x="14" y="705" width="6" height="1"/><rect x="14" y="711" width="6" height="1"/><rect x="19" y="705" width="1" height="7"/></g>
<rect x="14" y="706" width="5" height="5" fill="#e8e8e8"/>
<g fill="#000"><rect x="36" y="709" width="17" height="1"/><rect x="40" y="703" width="1" height="11"/></g>
<text x="141.5" y="715" font-size="11" fill="#f2f2f2" textLength="145" lengthAdjust="spacingAndGlyphs">Copyright (c) Saxo Bank 2004</text>
<rect x="0" y="719" width="1024" height="1" fill="#e6e6e6"/>
<rect x="0" y="720" width="1024" height="1" fill="#a8a8a8"/>
<rect x="0" y="721" width="1024" height="1" fill="#404040"/>
<rect x="0" y="722" width="1024" height="17" fill="#d4d0c8"/>
<rect x="0" y="722" width="1" height="17" fill="#404040"/>
<rect x="1022" y="722" width="1" height="17" fill="#f0f0f0"/>
<rect x="0" y="739" width="1024" height="2" fill="#f6f6f2"/>
<rect x="0" y="741" width="1024" height="3" fill="#d8d8d0"/>
<text x="3.5" y="735" font-size="11" fill="#000">Java Applet Window</text>
</svg></body></html>
